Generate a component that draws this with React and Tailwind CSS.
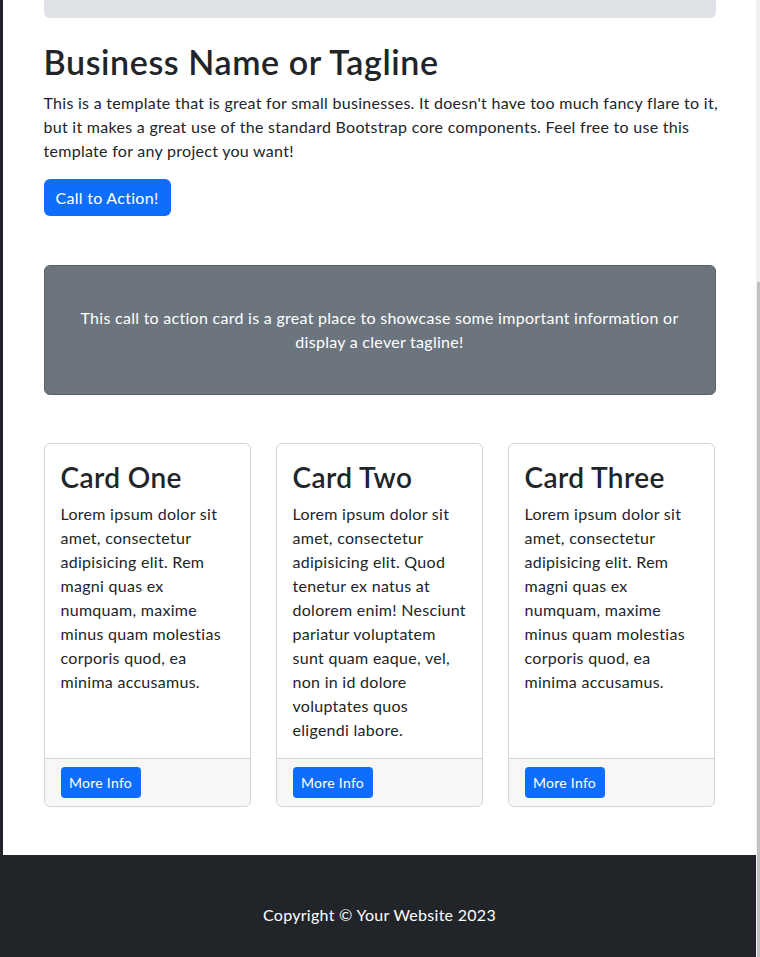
import React from "react";

const cards = [
  {
    title: "Card One",
    lines: [
      "Lorem ipsum dolor sit",
      "amet, consectetur",
      "adipisicing elit. Rem",
      "magni quas ex",
      "numquam, maxime",
      "minus quam molestias",
      "corporis quod, ea",
      "minima accusamus.",
    ],
  },
  {
    title: "Card Two",
    lines: [
      "Lorem ipsum dolor sit",
      "amet, consectetur",
      "adipisicing elit. Quod",
      "tenetur ex natus at",
      "dolorem enim! Nesciunt",
      "pariatur voluptatem",
      "sunt quam eaque, vel,",
      "non in id dolore",
      "voluptates quos",
      "eligendi labore.",
    ],
  },
  {
    title: "Card Three",
    lines: [
      "Lorem ipsum dolor sit",
      "amet, consectetur",
      "adipisicing elit. Rem",
      "magni quas ex",
      "numquam, maxime",
      "minus quam molestias",
      "corporis quod, ea",
      "minima accusamus.",
    ],
  },
];

function Lines({ lines }) {
  return lines.map((l, i) => (
    <span key={i} className="block whitespace-nowrap">
      {l}
    </span>
  ));
}

export default function App() {
  return (
    <div
      className="relative flex h-[957px] w-[760px] overflow-hidden bg-white text-[#212529] tracking-[0.28px]"
      style={{ fontFamily: "Lato, 'Noto Sans', sans-serif" }}
    >
      <div className="w-[3px] shrink-0 bg-[#212529]" />
      <div className="flex w-[753px] shrink-0 flex-col">
        <div className="mx-auto w-[672px]">
          <div className="mt-[-20px] h-[38px] rounded-md bg-[#dee2e6]" />
          <h1 className="mt-[24px] text-[34px] font-semibold leading-[40px] tracking-[0.6px]">
            Business Name or Tagline
          </h1>
          <p className="mt-[9px] text-[16px] leading-[24px]">
            <Lines
              lines={[
                "This is a template that is great for small businesses. It doesn't have too much fancy flare to it,",
                "but it makes a great use of the standard Bootstrap core components. Feel free to use this",
                "template for any project you want!",
              ]}
            />
          </p>
          <button className="mt-[16px] h-[37px] w-[127px] rounded-md bg-[#0d6efd] text-[16px] leading-[24px] text-white">
            Call to Action!
          </button>

          <div className="mt-[49px] rounded-md border border-[#5a6168] bg-[#6c757d] px-[16px] py-[40px] text-center text-[16px] leading-[24px] text-white">
            <p>
              This call to action card is a great place to showcase some important information or
              <br />
              display a clever tagline!
            </p>
          </div>

          <div className="mt-[48px] grid grid-cols-[207px_207px_207px] gap-[25px]">
            {cards.map((c) => (
              <div
                key={c.title}
                className="flex h-[364px] flex-col rounded-md border border-[#d3d4d5] bg-white"
              >
                <div className="flex-1 px-[16px] pt-[16px]">
                  <h2 className="text-[28px] font-semibold leading-[34px] tracking-[0.4px]">{c.title}</h2>
                  <p className="mt-[8px] text-[16px] leading-[24px]">
                    <Lines lines={c.lines} />
                  </p>
                </div>
                <div className="rounded-b-md border-t border-[#d3d4d5] bg-[#f7f7f7] px-[16px] py-[8px]">
                  <button className="h-[31px] w-[80px] rounded-[4px] bg-[#0d6efd] text-[14px] leading-[21px] text-white">
                    More Info
                  </button>
                </div>
              </div>
            ))}
          </div>
        </div>

        <footer className="mt-[48px] bg-[#212529] pb-[48px] pt-[48px] text-center text-[16px] leading-[24px] text-white">
          Copyright © Your Website 2023
        </footer>
      </div>
      <div className="relative w-[4px] shrink-0 bg-[#f1f1f1]">
        <div className="absolute bottom-0 right-0 top-[282px] w-[3px] bg-[#c1c1c1]" />
      </div>
    </div>
  );
}
